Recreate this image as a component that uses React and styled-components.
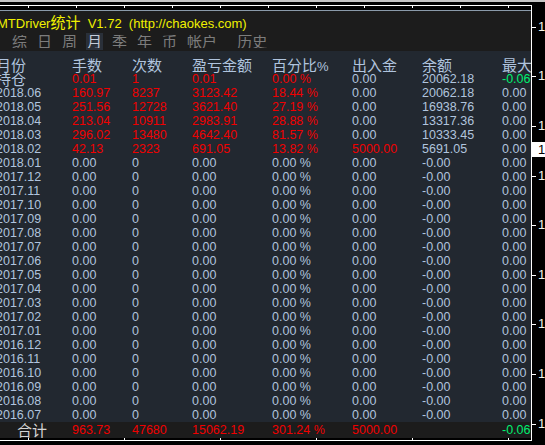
import React from 'react';
import styled, { createGlobalStyle } from 'styled-components';

const GlobalStyle = createGlobalStyle`
  html, body {
    margin: 0;
    padding: 0;
    background: #000;
  }
  body {
    font-family: "Liberation Sans", Arial, "Noto Sans CJK SC", sans-serif;
  }
`;

const BLUE = '#b0c4de';
const RED = '#f00000';
const GREEN = '#00f070';

const Page = styled.div`
  width: 545px;
  height: 445px;
  background: #000;
  overflow: hidden;
  display: flex;
  flex-direction: column;
`;

const TopStrip = styled.div`
  height: 2px;
  background: #c4c4c4;
  margin-bottom: 3px;
  flex: none;
`;

const ChartRow = styled.div`
  display: flex;
  height: 436px;
  flex: none;
`;

const Chart = styled.div`
  width: 531px;
  border-top: 1px solid #fff;
  border-right: 1px solid #fff;
  border-bottom: 1px solid #fff;
  display: flex;
  flex-direction: column;
  flex: none;
`;

const TickStrip = styled.div`
  height: ${p => p.$h}px;
  flex: none;
  background-image: repeating-linear-gradient(to right, #fff 0 1px, transparent 1px ${p => p.$step}px);
  background-size: 100% 2px;
  background-repeat: no-repeat;
  background-position: 28px ${p => (p.$bottom ? '100%' : '0')};
`;

const Panel = styled.div`
  margin-left: -4px;
  width: 535px;
  overflow: hidden;
  border-top: 1px solid #8a9aaa;
  display: flex;
  flex-direction: column;
  flex: none;
`;

const Head = styled.div`
  background: #1c1c1c;
  height: 40px;
  display: flex;
  flex-direction: column;
`;

const Title = styled.div`
  height: 21px;
  line-height: 21px;
  padding-left: 1px;
  color: #f0f000;
  font-size: 13px;
  white-space: pre;
`;

const Cjk = styled.span`
  font-family: "Noto Sans CJK SC", sans-serif;
  font-size: 15px;
`;

const Tabs = styled.div`
  display: flex;
  gap: 8px;
  padding: 1px 0 0 15px;
`;

const Tab = styled.div`
  height: 17px;
  padding: 0 1px;
  margin-left: ${p => p.$gap || 0}px;
  background: ${p => (p.$active ? '#2a3039' : 'transparent')};
`;

const TabClip = styled.div`
  height: 13px;
  margin-top: 2px;
  overflow: hidden;
`;

const TabLabel = styled.div`
  font-family: "Noto Sans CJK SC", sans-serif;
  font-size: 15px;
  line-height: 15px;
  margin-top: -2px;
  color: ${p => (p.$active ? '#c4ccd8' : '#7c7c7c')};
`;

const Table = styled.div`
  background: #222830;
  height: 371px;
  padding-top: 7px;
  box-sizing: border-box;
`;

const Row = styled.div`
  display: grid;
  grid-template-columns: 76px 60px 60px 80px 80px 70px 80px 80px;
  height: ${p => p.$h || 14}px;
  line-height: ${p => p.$h || 14}px;
  font-size: 12.5px;
  white-space: nowrap;
  background: ${p => p.$bg || 'transparent'};
`;

const Cell = styled.div`
  color: ${p => p.$color || BLUE};
  padding-left: ${p => p.$indent || 0}px;
  overflow: visible;
`;

const HeadCell = styled(Cell)`
  font-family: "Noto Sans CJK SC", sans-serif;
  font-size: 15px;
`;

const Pct = styled.span`
  font-family: "Liberation Sans", Arial, sans-serif;
  font-size: 13px;
`;

const Axis = styled.div`
  position: relative;
  width: 13px;
  flex: none;
`;

const AxisLabel = styled.div`
  position: absolute;
  left: 0;
  top: ${p => p.$y}px;
  height: 14px;
  line-height: 14px;
  display: flex;
  align-items: center;
  font-size: 13px;
  color: #f4f4ec;
  &::before {
    content: '';
    width: 4px;
    height: 1px;
    background: #fff;
    margin-right: 2px;
  }
`;

const CurrentPrice = styled.div`
  position: absolute;
  left: 0;
  top: 137px;
  width: 13px;
  height: 15px;
  line-height: 15px;
  background: #fff;
  color: #000;
  font-size: 13px;
  padding-left: 6px;
  box-sizing: border-box;
`;

const r = RED;
const rows = [
  ['持仓', ['0.01', r], ['1', r], ['0.01', r], ['0.00 %', r], ['0.00'], ['20062.18'], ['-0.06', GREEN]],
  ['2018.06', ['160.97', r], ['8237', r], ['3123.42', r], ['18.44 %', r], ['0.00'], ['20062.18'], ['0.00']],
  ['2018.05', ['251.56', r], ['12728', r], ['3621.40', r], ['27.19 %', r], ['0.00'], ['16938.76'], ['0.00']],
  ['2018.04', ['213.04', r], ['10911', r], ['2983.91', r], ['28.88 %', r], ['0.00'], ['13317.36'], ['0.00']],
  ['2018.03', ['296.02', r], ['13480', r], ['4642.40', r], ['81.57 %', r], ['0.00'], ['10333.45'], ['0.00']],
  ['2018.02', ['42.13', r], ['2323', r], ['691.05', r], ['13.82 %', r], ['5000.00', r], ['5691.05'], ['0.00']],
];
const empty = [['0.00'], ['0'], ['0.00'], ['0.00 %'], ['0.00'], ['-0.00'], ['0.00']];
['2018.01',
  '2017.12', '2017.11', '2017.10', '2017.09', '2017.08', '2017.07', '2017.06', '2017.05', '2017.04', '2017.03', '2017.02', '2017.01',
  '2016.12', '2016.11', '2016.10', '2016.09', '2016.08', '2016.07',
].forEach(m => rows.push([m, ...empty]));

const tabs = [
  { label: '综' }, { label: '日' }, { label: '周' }, { label: '月', active: true }, { label: '季' },
  { label: '年' }, { label: '币' }, { label: '帐户' }, { label: '历史', gap: 10 },
];

const axisYs = [15, 64, 114, 164, 213, 263, 312, 362, 412];

export default function App() {
  return (
    <>
      <GlobalStyle />
      <Page>
        <TopStrip />
        <ChartRow>
          <Chart>
            <TickStrip $h={4} $step={48} />
            <Panel>
              <Head>
                <Title>MTDriver<Cjk>统计</Cjk>  V1.72  (http://chaokes.com)</Title>
                <Tabs>
                  {tabs.map(t => (
                    <Tab key={t.label} $active={t.active} $gap={t.gap}>
                      <TabClip>
                        <TabLabel $active={t.active}>{t.label}</TabLabel>
                      </TabClip>
                    </Tab>
                  ))}
                </Tabs>
              </Head>
              <Table>
                <Row>
                  <HeadCell>月份</HeadCell>
                  <HeadCell>手数</HeadCell>
                  <HeadCell>次数</HeadCell>
                  <HeadCell>盈亏金额</HeadCell>
                  <HeadCell>百分比<Pct>%</Pct></HeadCell>
                  <HeadCell>出入金</HeadCell>
                  <HeadCell>余额</HeadCell>
                  <HeadCell>最大回撤</HeadCell>
                </Row>
                {rows.map(([label, ...cells]) => (
                  <Row key={label}>
                    {label === '持仓' ? <HeadCell>{label}</HeadCell> : <Cell>{label}</Cell>}
                    {cells.map(([v, c], i) => (
                      <Cell key={i} $color={c}>{v}</Cell>
                    ))}
                  </Row>
                ))}
              </Table>
              <Row $h={16} $bg="#1c1c1c">
                <HeadCell $indent={21} $color="#d4d4d4">合计</HeadCell>
                <Cell $color={RED}>963.73</Cell>
                <Cell $color={RED}>47680</Cell>
                <Cell $color={RED}>15062.19</Cell>
                <Cell $color={RED}>301.24 %</Cell>
                <Cell $color={RED}>5000.00</Cell>
                <Cell />
                <Cell $color={GREEN}>-0.06</Cell>
              </Row>
            </Panel>
            <TickStrip $h={2} $step={96} $bottom />
          </Chart>
          <Axis>
            {axisYs.map(y => (
              <AxisLabel key={y} $y={y}>1</AxisLabel>
            ))}
            <CurrentPrice>1</CurrentPrice>
          </Axis>
        </ChartRow>
      </Page>
    </>
  );
}
